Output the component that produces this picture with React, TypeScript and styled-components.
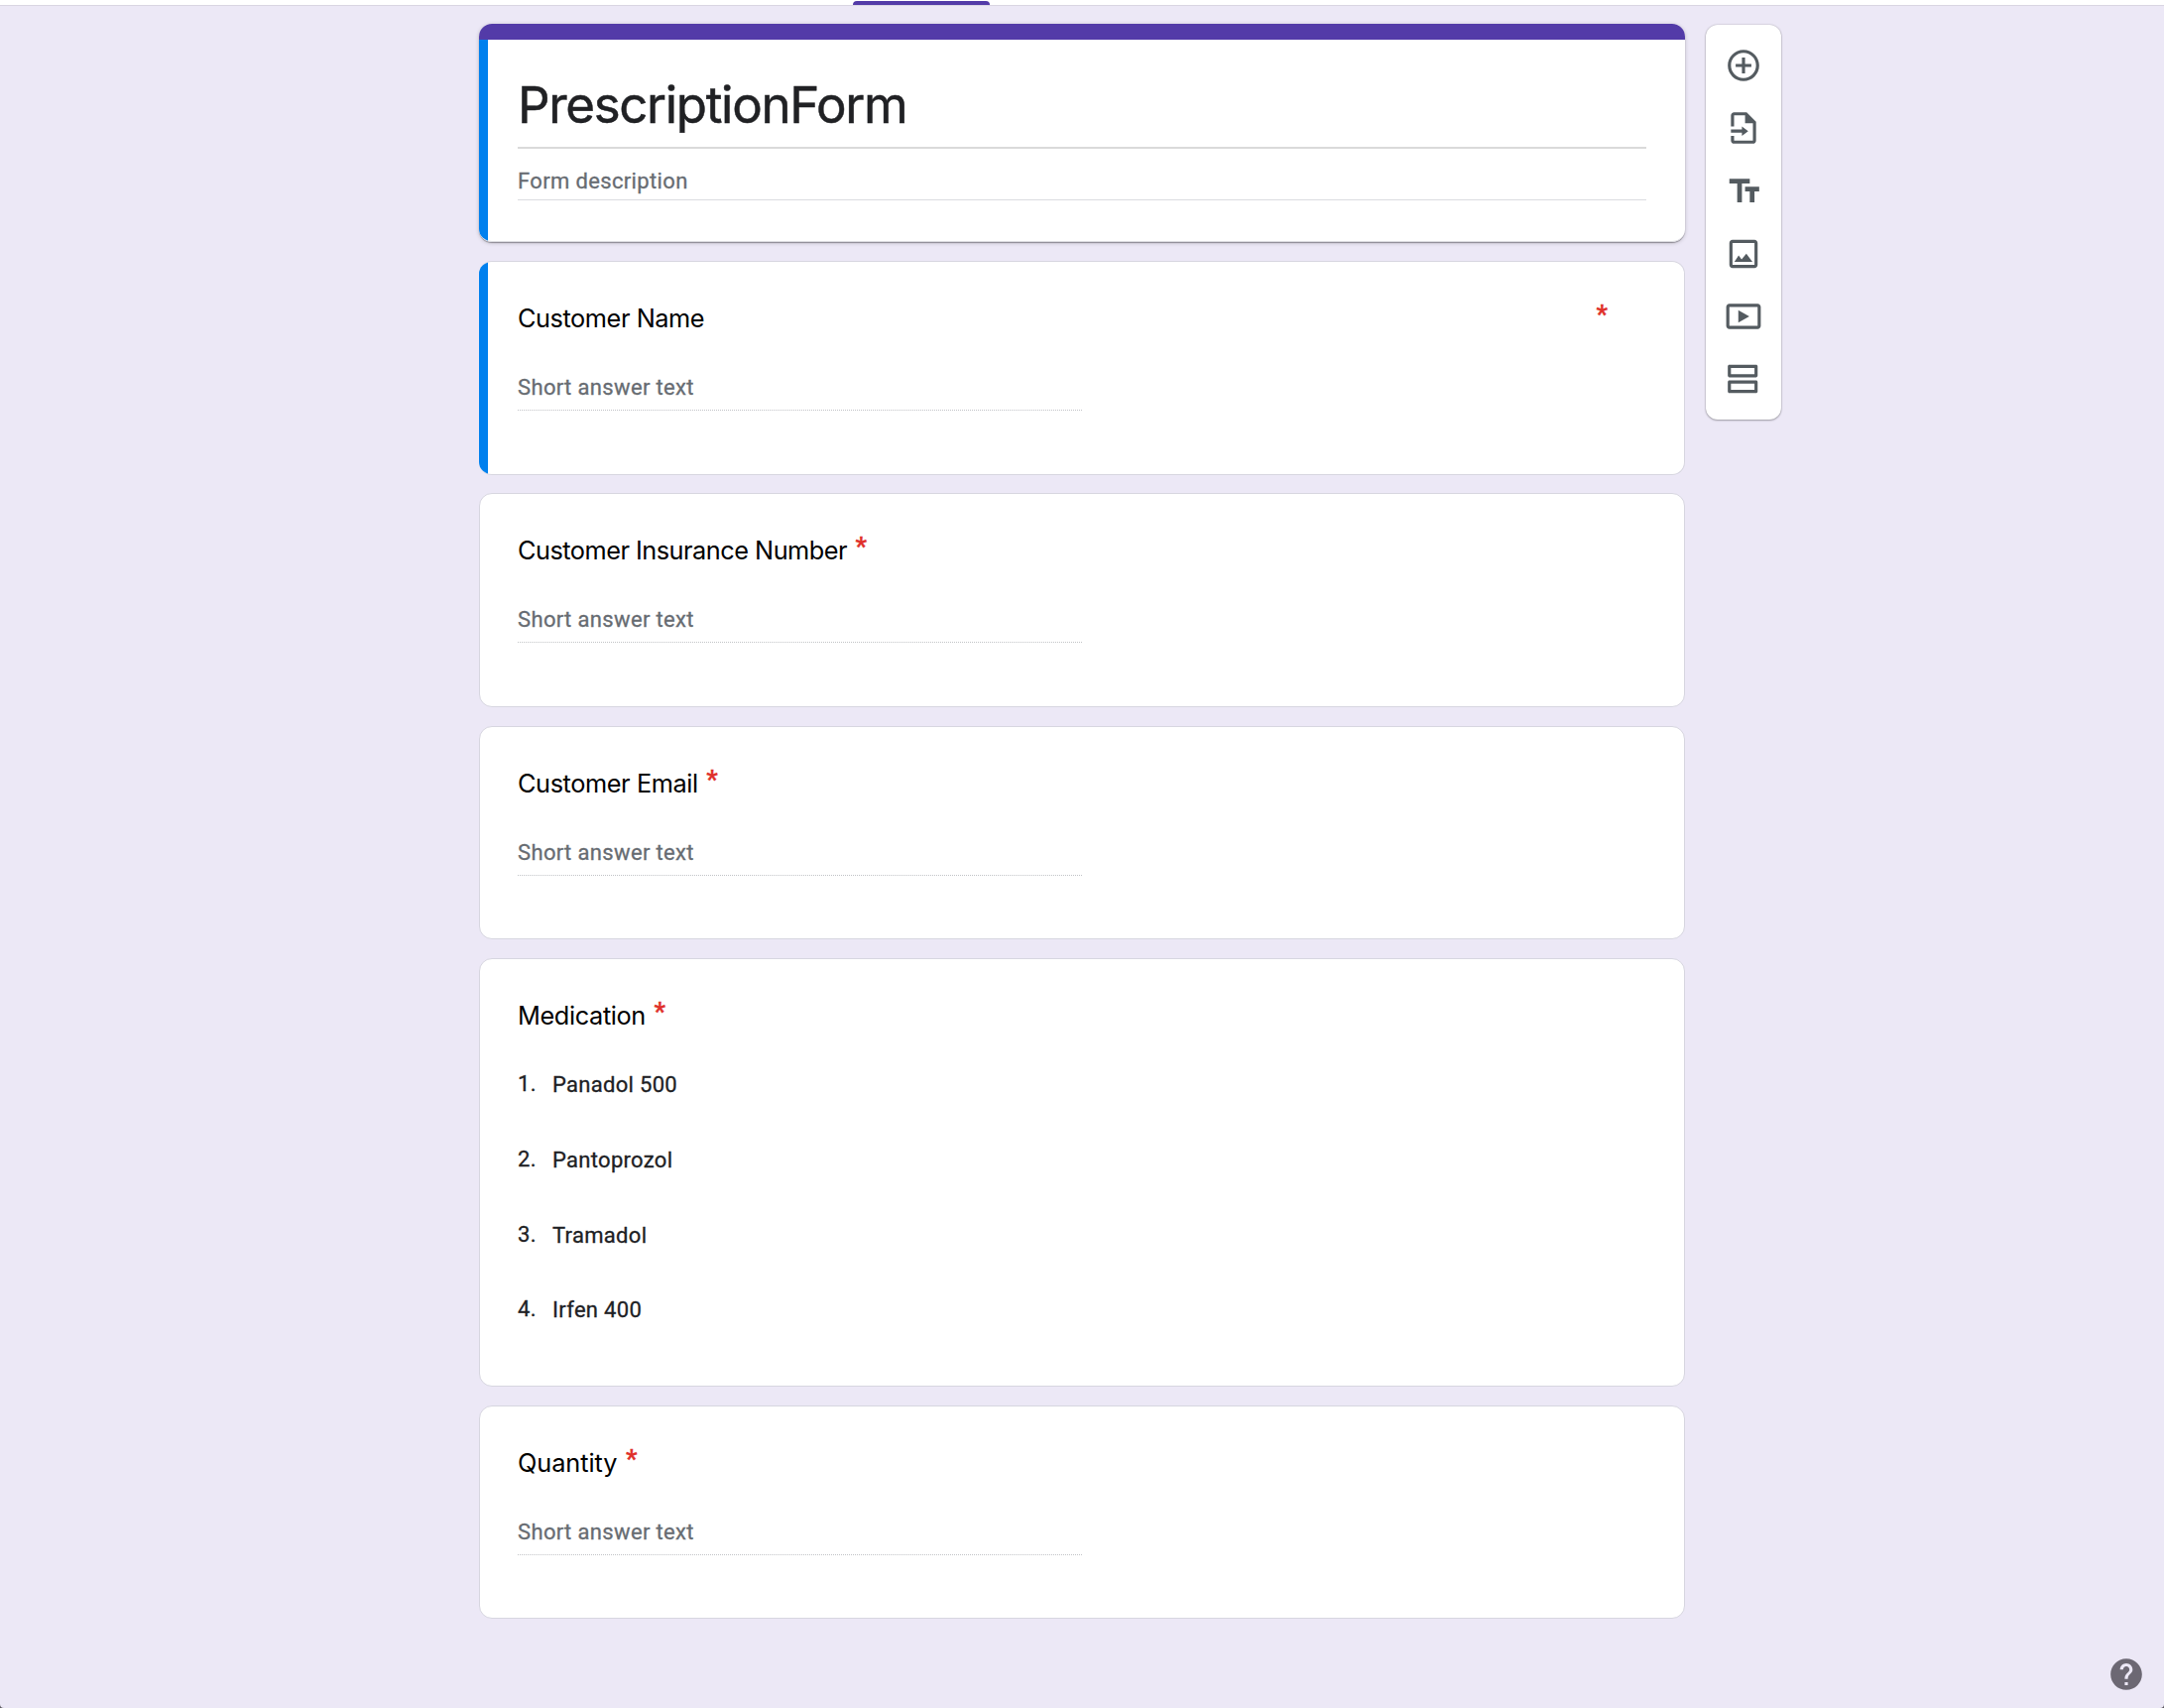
import React from 'react';
import styled, { createGlobalStyle, css } from 'styled-components';

const sans = `Inter, 'Open Sans', sans-serif`;
const body = `Roboto, 'Liberation Sans', sans-serif`;

const GlobalStyle = createGlobalStyle`
  *, *::before, *::after { box-sizing: border-box; }
  html, body { margin: 0; padding: 0; background: #5b5960; }
`;

const Page = styled.div`
  width: 2182px;
  height: 1722px;
  overflow: hidden;
  display: flex;
  flex-direction: column;
  background: #ece8f6;
  border-radius: 0 0 4px 4px;
  font-family: ${body};
  -webkit-text-stroke-width: 0.3px;
`;

const TopBar = styled.header`
  flex: none;
  height: 6px;
  padding: 1px 0 0 860px;
  background: #fff;
  border-bottom: 1px solid #d9d5e2;
`;

const ActiveTab = styled.div`
  width: 138px;
  height: 4px;
  border-radius: 4px 4px 0 0;
  background: #533ba8;
`;

const Workspace = styled.main`
  display: flex;
  align-items: flex-start;
  gap: 21px;
  padding: 18px 0 0 483px;
`;

const Column = styled.div`
  width: 1216px;
  display: flex;
  flex-direction: column;
  gap: 19px;
`;

const Card = styled.section<{ $height: number; $marked?: boolean }>`
  position: relative;
  height: ${(p) => p.$height}px;
  padding: 40px 38px 0;
  background: #fff;
  border: 1px solid #d7d6e0;
  border-radius: 13px;
  overflow: hidden;
  ${(p) =>
    p.$marked &&
    css`
      margin-bottom: -1px;
      border-left: 0;
      padding-left: 39px;
      &::before {
        content: '';
        position: absolute;
        left: 0;
        top: -1px;
        bottom: -1px;
        width: 9px;
        background: #0080ee;
      }
    `}
`;

const HeaderCard = styled.section`
  position: relative;
  height: 220px;
  padding: 0 39px;
  background: #fff;
  border-bottom: 1px solid #dcdce0;
  border-radius: 13px;
  overflow: hidden;
  &::before {
    content: '';
    position: absolute;
    left: 0;
    top: 16px;
    bottom: -1px;
    width: 9px;
    background: #0080ee;
  }
`;

const HeaderShadow = styled.div`
  border-radius: 13px;
  box-shadow: 0 1px 1px rgba(0, 0, 0, 0.32), 0 1px 4px rgba(0, 0, 0, 0.2);
`;

const ThemeStripe = styled.div`
  height: 16px;
  margin: 0 -39px;
  background: #533ba8;
`;

const FormTitle = styled.h1`
  margin: 0;
  height: 110px;
  padding-top: 34px;
  border-bottom: 2px solid #dadada;
  font: 400 51px/64px ${sans};
  letter-spacing: -1.32px;
  color: #202124;
  -webkit-text-stroke-width: 0.5px;
`;

const FormDescription = styled.div`
  height: 52px;
  padding-top: 20px;
  border-bottom: 1px solid #dadce0;
  font: 400 22px/26px ${body};
  letter-spacing: 0.35px;
  color: #676c72;
`;

const QuestionHead = styled.div<{ $spread?: boolean }>`
  display: flex;
  height: 34px;
  justify-content: ${(p) => (p.$spread ? 'space-between' : 'flex-start')};
  padding-right: ${(p) => (p.$spread ? 39 : 0)}px;
  gap: 8.5px;
`;

const QuestionTitle = styled.h2<{ $tracking: number }>`
  margin: 0;
  font: 400 25.3px/34px ${sans};
  letter-spacing: ${(p) => p.$tracking}px;
  color: #000;
  white-space: nowrap;
  -webkit-text-stroke-width: 0;
`;

const Required = styled.span`
  margin-top: -3px;
  font: 700 25.3px/34px ${body};
  color: #e0302a;
`;

const Answer = styled.div`
  width: 569px;
  height: 76px;
  padding-top: 40px;
  border-bottom: 1px dotted #c2c4c7;
  font: 400 22px/26px ${body};
  letter-spacing: 0.35px;
  color: #676c72;
`;

const Options = styled.ol`
  list-style: none;
  margin: 35px 0 0;
  padding: 0;
`;

const Option = styled.li`
  display: grid;
  grid-template-columns: 35px auto;
  height: 75.8px;
  padding-top: 5px;
  font: 400 22px/26px ${body};
  letter-spacing: 0.3px;
  color: #202124;
`;

const OptionNumber = styled.span`
  margin-top: -1px;
`;

const Toolbar = styled.nav`
  width: 76px;
  height: 398px;
  display: flex;
  flex-direction: column;
  align-items: center;
  gap: 25.3px;
  padding-top: 22px;
  margin-top: 1px;
  background: #fff;
  border-radius: 12px;
  box-shadow: 0 1px 2px rgba(0, 0, 0, 0.28), 0 0 2px rgba(0, 0, 0, 0.25);
`;

const Glyph = styled.svg`
  width: 38px;
  height: 38px;
  flex: none;
  display: block;
  fill: #545b60;
`;

const HelpButton = styled.div`
  position: absolute;
  left: 2125px;
  top: 1669px;
  svg { fill: #6c6873; }
`;

const tools = [
  { name: 'Add question', d: 'M13 7h-2v4H7v2h4v4h2v-4h4v-2h-4V7zm-1-5C6.48 2 2 6.48 2 12s4.48 10 10 10 10-4.48 10-10S17.52 2 12 2zm0 18c-4.41 0-8-3.59-8-8s3.59-8 8-8 8 3.59 8 8-3.59 8-8 8z' },
  { name: 'Import questions', d: 'M14 2H6c-1.1 0-2 .9-2 2v7h2V4h7v5h5v11H6v-3H4v3c0 1.1.9 2 2 2h12c1.1 0 2-.9 2-2V8l-6-6zM11 17l4-3-4-3v2H4v2h7z' },
  { name: 'Add title and description', d: 'M3 4v3h5v12h3V7h5V4H3zm19 5h-9v3h3v7h3v-7h3V9z' },
  { name: 'Add image', d: 'M19 5v14H5V5h14m0-2H5c-1.1 0-2 .9-2 2v14c0 1.1.9 2 2 2h14c1.1 0 2-.9 2-2V5c0-1.1-.9-2-2-2zM6.2 17h11.5l-3.9-5.2-3 3.700-1.900-2.600z' },
  { name: 'Add video', d: 'M8.7 8v8l7-4-7-4zM21 4H3c-1.1 0-2 .9-2 2v12c0 1.1.9 2 2 2h18c1.1 0 2-.9 2-2V6c0-1.1-.9-2-2-2zm0 14H3V6h18v12z' },
  { name: 'Add section', d: 'M19 5v4H4V5h15m1-2H3c-.55 0-1 .45-1 1v6c0 .55.45 1 1 1h17c.55 0 1-.45 1-1V4c0-.55-.45-1-1-1zM19 15v4H4v-4h15m1-2H3c-.55 0-1 .45-1 1v6c0 .55.45 1 1 1h17c.55 0 1-.45 1-1v-6c0-.55-.45-1-1-1z' },
];

type ShortQuestion = { title: string; height: number; tracking: number; marked?: boolean };

function ShortAnswerCard({ title, height, tracking, marked }: ShortQuestion) {
  return (
    <Card $height={height} $marked={marked}>
      <QuestionHead $spread={marked}>
        <QuestionTitle $tracking={tracking}>{title}</QuestionTitle>
        <Required>*</Required>
      </QuestionHead>
      <Answer>Short answer text</Answer>
    </Card>
  );
}

const medications = ['Panadol 500', 'Pantoprozol', 'Tramadol', 'Irfen 400'];

export default function App() {
  return (
    <>
      <GlobalStyle />
      <Page>
        <TopBar>
          <ActiveTab />
        </TopBar>
        <Workspace>
          <Column>
            <HeaderShadow>
              <HeaderCard>
                <ThemeStripe />
                <FormTitle>PrescriptionForm</FormTitle>
                <FormDescription>Form description</FormDescription>
              </HeaderCard>
            </HeaderShadow>
            <ShortAnswerCard title="Customer Name" height={216} tracking={-0.43} marked />
            <ShortAnswerCard title="Customer Insurance Number" height={216} tracking={-0.5} />
            <ShortAnswerCard title="Customer Email" height={215} tracking={-0.4} />
            <Card $height={432}>
              <QuestionHead>
                <QuestionTitle $tracking={-0.37}>Medication</QuestionTitle>
                <Required>*</Required>
              </QuestionHead>
              <Options>
                {medications.map((name, i) => (
                  <Option key={name}>
                    <OptionNumber>{i + 1}.</OptionNumber>
                    <span>{name}</span>
                  </Option>
                ))}
              </Options>
            </Card>
            <ShortAnswerCard title="Quantity" height={215} tracking={-0.05} />
          </Column>
          <Toolbar>
            {tools.map((tool) => (
              <Glyph key={tool.name} viewBox="0 0 24 24" aria-label={tool.name}>
                <path d={tool.d} />
              </Glyph>
            ))}
          </Toolbar>
        </Workspace>
        <HelpButton>
          <Glyph viewBox="0 0 24 24" aria-label="Help">
            <path d="M12 2C6.48 2 2 6.48 2 12s4.48 10 10 10 10-4.48 10-10S17.52 2 12 2zm1 17h-2v-2h2v2zm2.07-7.75l-.9.92C13.45 12.9 13 13.5 13 15h-2v-.5c0-1.1.45-2.1 1.17-2.83l1.24-1.26c.37-.36.59-.86.59-1.41 0-1.1-.9-2-2-2s-2 .9-2 2H8c0-2.21 1.79-4 4-4s4 1.79 4 4c0 .88-.36 1.68-.93 2.25z" />
          </Glyph>
        </HelpButton>
      </Page>
    </>
  );
}
